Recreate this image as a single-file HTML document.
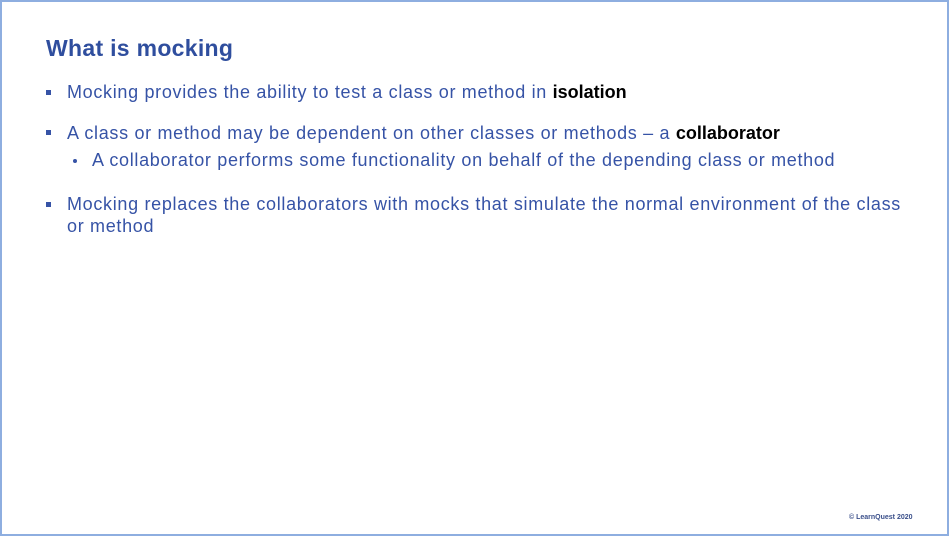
<!DOCTYPE html>
<html><head><style>
body{margin:0;width:949px;height:536px;overflow:hidden;background:#fff;font-family:"Liberation Sans",sans-serif;}
.frame{position:absolute;left:0;top:0;width:945px;height:532px;border:2px solid #8eaee0;}
.t{position:absolute;left:46px;top:35px;font-size:23px;letter-spacing:0.3px;font-weight:bold;color:#2f4e9e;}
.l{position:absolute;left:67px;font-size:18px;letter-spacing:0.68px;color:#3653a6;white-space:nowrap;}
.b{position:absolute;left:46px;width:5px;height:5px;background:#3653a6;}
.d{position:absolute;left:73px;width:4px;height:4px;border-radius:50%;background:#3653a6;}
strong{color:#000;letter-spacing:0px;}
.c{position:absolute;left:849px;top:514px;font-size:7px;font-weight:bold;color:#3a4f8a;}
</style></head><body>
<div class="frame"></div>
<div class="t">What is mocking</div>
<div class="b" style="top:90px"></div>
<div class="l" style="top:82px">Mocking provides the ability to test a class or method in <strong>isolation</strong></div>
<div class="b" style="top:130px"></div>
<div class="l" style="top:123px">A class or method may be dependent on other classes or methods – a <strong>collaborator</strong></div>
<div class="d" style="top:159px"></div>
<div class="l" style="left:92px;top:150px">A collaborator performs some functionality on behalf of the depending class or method</div>
<div class="b" style="top:202px"></div>
<div class="l" style="top:194px">Mocking replaces the collaborators with mocks that simulate the normal environment of the class</div>
<div class="l" style="top:216px">or method</div>
<div class="c">© LearnQuest 2020</div>
</body></html>
